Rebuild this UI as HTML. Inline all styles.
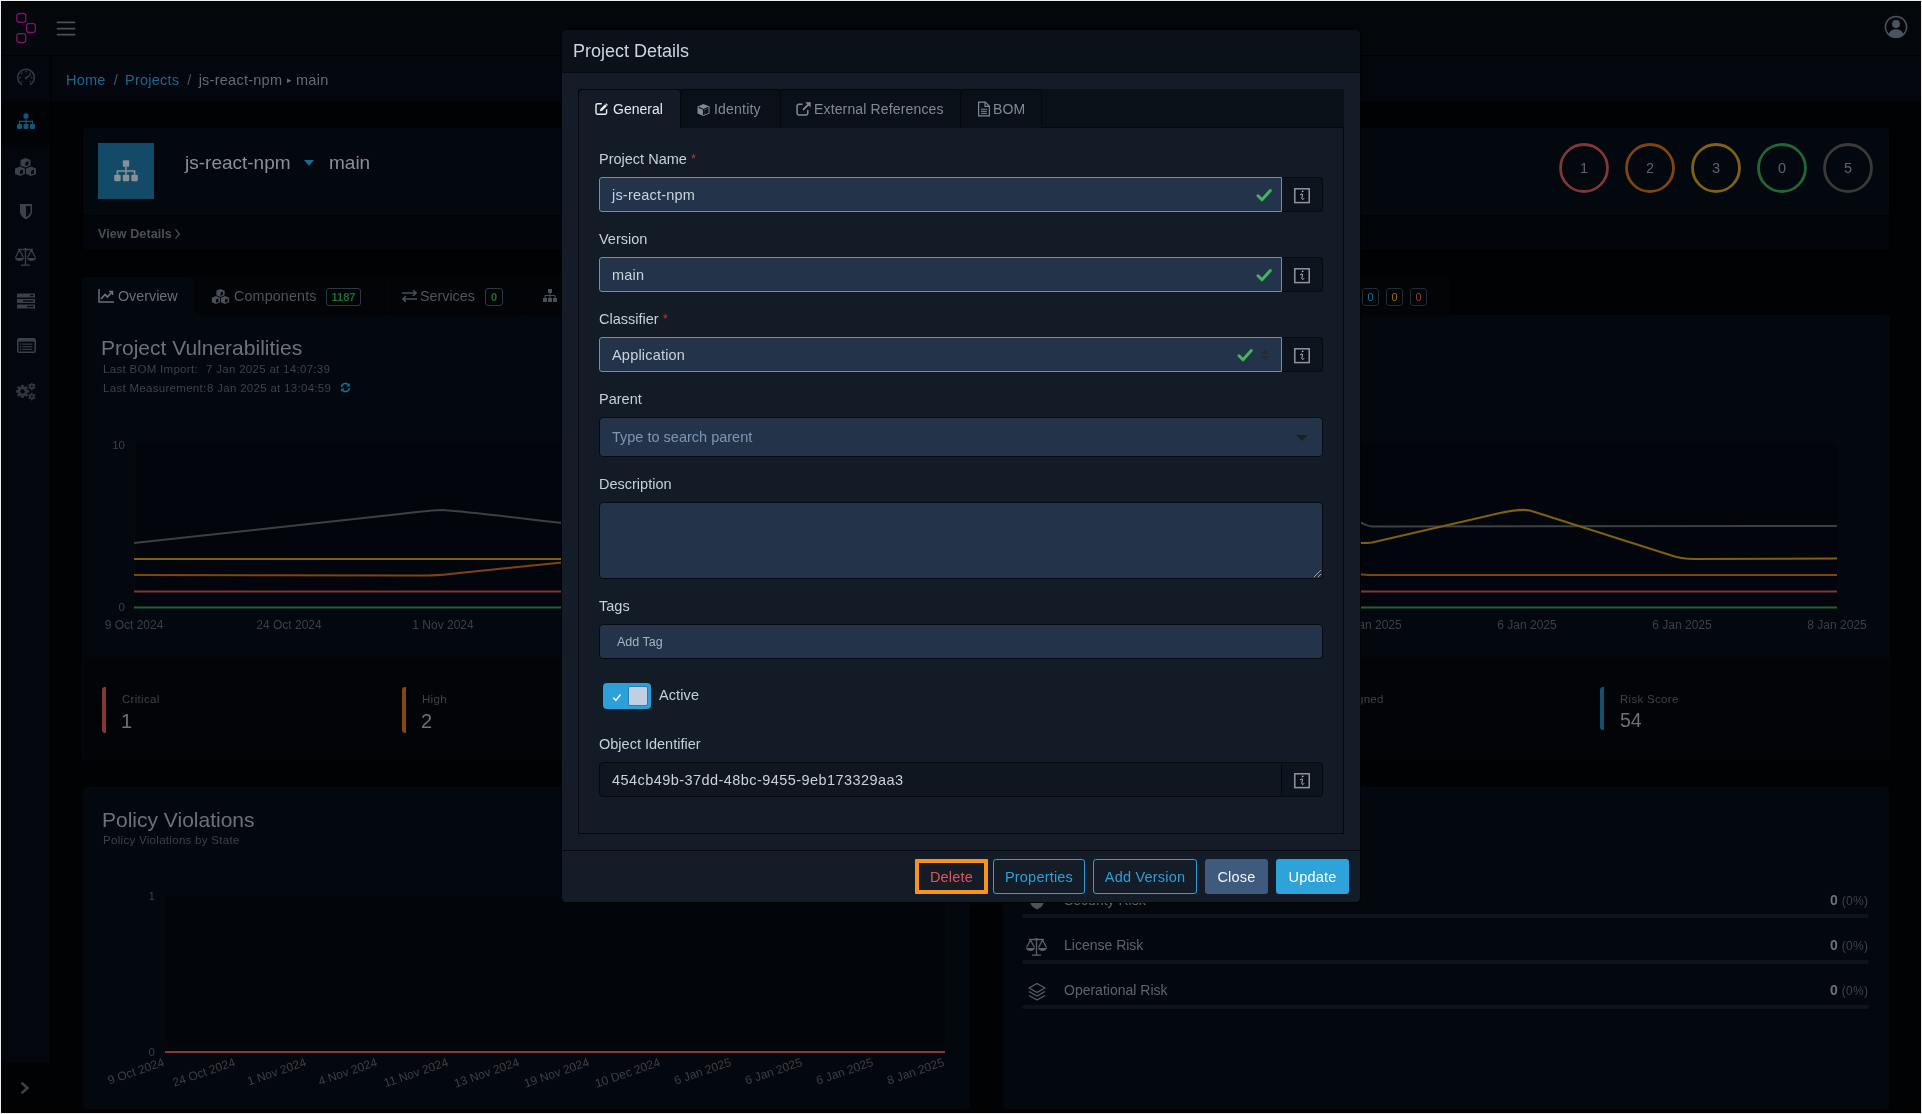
<!DOCTYPE html>
<html><head><meta charset="utf-8">
<style>
*{box-sizing:border-box;margin:0;padding:0}
html,body{width:1922px;height:1114px;overflow:hidden;background:#ececec;font-family:"Liberation Sans",sans-serif}
body{-webkit-font-smoothing:antialiased}
#wrap{position:absolute;left:0;top:0;width:1922px;height:1114px;will-change:transform}
.a{position:absolute;white-space:nowrap}
#scr{left:1px;top:1px;width:1920px;height:1112px;background:#000}
.t14{font-size:14px;line-height:14px}
/* modal */
#modal{left:561px;top:29px;width:800px;height:874px;background:#131c27;border:1px solid #010305;border-radius:5px}
#mhead{left:562px;top:30px;width:798px;height:43px;background:#0b1118;border-bottom:1px solid #05080c;border-radius:4px 4px 0 0}
#mfoot{left:562px;top:850px;width:798px;height:1px;background:#05080c}
#tabnav{left:578px;top:89px;width:766px;height:38px;background:#0a1018}
.tab{top:89px;height:39px;border:1px solid #05080c;border-bottom:none;border-radius:4px 4px 0 0;background:#0a1018;color:#7f8a96;font-size:14px;line-height:14px;padding-top:12px}
.tab.act{background:#121b26;color:#e6eaee}
#tcard{left:578px;top:127px;width:766px;height:707px;background:#121b26;border:1px solid #05080c}
.lbl{position:absolute;left:599px;font-size:14.5px;line-height:14px;color:#c6d0db}
.req{color:#d8262d;font-size:13px;vertical-align:top;position:relative;top:0px}
.inp{position:absolute;left:599px;width:683px;height:35px;background:#22334a;border:1px solid #46b45e;border-radius:3px 0 0 3px;font-size:14.5px;line-height:14.5px;color:#c9d3de;padding:10px 0 0 12px;letter-spacing:0.2px}
.addon{position:absolute;left:1282px;width:41px;height:35px;background:#0d141d;border:1px solid #070b10;border-left:none;border-radius:0 4px 4px 0}
.info{position:absolute;left:11.5px;top:10px}
.info i{position:absolute;left:4px;top:-1px;font-family:"Liberation Serif",serif;font-size:13px;line-height:13px;color:#c9d1da;font-style:italic}
.chk{position:absolute;top:10px;width:16px;height:14px}
.btn{top:859px;height:35px;border-radius:3px;font-size:14.5px;line-height:14px;letter-spacing:0.2px;padding-top:10px;text-align:center}
</style></head><body><div id="wrap">
<div id="scr" class="a"></div>


<!-- ===== BACKGROUND PAGE (dimmed) ===== -->
<div class="a" style="left:2px;top:2px;width:1919px;height:53px;background:#03060b"></div>
<div class="a" style="left:2px;top:56px;width:48px;height:1007px;background:#03070d"></div>
<div class="a" style="left:2px;top:101px;width:48px;height:44px;background:#010305"></div>
<div class="a" style="left:2px;top:1063px;width:48px;height:49px;background:#010204"></div>
<div class="a" style="left:51px;top:56px;width:1870px;height:45px;background:#03070d"></div>
<div class="a" style="left:51px;top:101px;width:1870px;height:1011px;background:#010204"></div>


<!-- header -->
<svg class="a" style="left:14px;top:11px" width="24" height="34" viewBox="0 0 24 34">
 <g fill="none" stroke="#80116f" stroke-width="1.3">
 <rect x="2.8" y="2.5" width="8.9" height="8.9" rx="2.4"/>
 <rect x="12.5" y="12.6" width="8.9" height="8.9" rx="2.4"/>
 <rect x="2.8" y="22.6" width="8.9" height="8.9" rx="2.4"/>
 </g></svg>
<svg class="a" style="left:56px;top:20px" width="20" height="16" viewBox="0 0 20 16">
 <g stroke="#4a5058" stroke-width="1.8" stroke-linecap="round"><path d="M1.5 2.3h17M1.5 8.6h17M1.5 14.6h17"/></g></svg>
<svg class="a" style="left:1884px;top:15px" width="24" height="24" viewBox="0 0 24 24">
 <circle cx="12" cy="12" r="10.6" fill="none" stroke="#4a5360" stroke-width="1.5"/>
 <circle cx="12" cy="9" r="4" fill="#4a5360"/>
 <path d="M4.5 19.2c1.2-3.4 4-5 7.5-5s6.3 1.6 7.5 5c-2 1.9-4.6 3-7.5 3s-5.5-1.1-7.5-3z" fill="#4a5360"/></svg>

<!-- sidebar icons -->
<svg class="a" style="left:16px;top:67px" width="20" height="20" viewBox="0 0 20 20">
 <path d="M5.85 17.7A8.3 8.3 0 1 1 14.15 17.7" fill="none" stroke="#30373f" stroke-width="1.6"/>
 <g fill="#30373f"><circle cx="4.2" cy="10.5" r=".9"/><circle cx="5.9" cy="6.4" r=".9"/><circle cx="10" cy="4.5" r=".9"/><circle cx="14.1" cy="6.4" r=".9"/><circle cx="15.8" cy="10.5" r=".9"/><circle cx="5.9" cy="14.6" r=".8"/><circle cx="14.1" cy="14.6" r=".8"/></g>
 <path d="M10 11l4.2-2.8" stroke="#30373f" stroke-width="1.6" stroke-linecap="round"/><circle cx="10" cy="11" r="1.2" fill="#30373f"/></svg>
<svg class="a" style="left:16px;top:112px" width="20" height="18" viewBox="0 0 20 18">
 <g fill="#16557a"><rect x="7.5" y="1.5" width="5" height="5" rx="1"/><rect x="1" y="12" width="5" height="5" rx="1"/><rect x="7.5" y="12" width="5" height="5" rx="1"/><rect x="14" y="12" width="5" height="5" rx="1"/></g>
 <path d="M10 6.5v5.5M3.5 12V9.3h13V12" fill="none" stroke="#16557a" stroke-width="1.2"/></svg>
<svg class="a" style="left:14px;top:157px" width="23" height="20" viewBox="0 0 23 20">
 <g fill="#3a4149"><path d="M11.5 1l5 2v5.5l-5 2-5-2V3z"/><path d="M6 9.5l5 2v5.5l-5 2-5-2v-5.5z"/><path d="M17 9.5l5 2v5.5l-5 2-5-2v-5.5z"/></g>
 <g fill="#03070d"><path d="M11.5 5.2l3-1.2v3.8l-3 1.2z"/><path d="M6 13.7l3-1.2v3.8l-3 1.2z"/><path d="M17 13.7l3-1.2v3.8l-3 1.2z"/></g></svg>
<svg class="a" style="left:19px;top:203px" width="14" height="17" viewBox="0 0 14 17">
 <path d="M1 1h12v7.5c0 3.5-3 6.5-6 7.8C4 15 1 12 1 8.5z" fill="#3a4149"/><path d="M7 3h4.5v5.5c0 2.2-2 4.3-4.5 5.5z" fill="#03070d"/></svg>
<svg class="a" style="left:14px;top:247px" width="23" height="20" viewBox="0 0 23 20">
 <g fill="none" stroke="#3a4149" stroke-width="1.3"><path d="M11.5 2v16M7 18.2h9M4 2.5h15"/><path d="M5.5 3L1.5 10.5M5.5 3l4 7.5M17.5 3l-4 7.5M17.5 3l4 7.5"/></g>
 <g fill="#3a4149"><path d="M1 11h9c-.5 2-2.3 3-4.5 3S1.5 13 1 11z"/><path d="M13 11h9c-.5 2-2.3 3-4.5 3S13.5 13 13 11z"/><circle cx="11.5" cy="2.3" r="1.4"/></g></svg>
<svg class="a" style="left:17px;top:293px" width="19" height="16" viewBox="0 0 19 16">
 <g fill="#3a4149"><rect x="0" y="0.5" width="18" height="4" rx=".6"/><rect x="0" y="6" width="18" height="4" rx=".6"/><rect x="0" y="11.5" width="18" height="4" rx=".6"/></g>
 <g fill="#03070d"><rect x="13" y="1.8" width="3.5" height="1.4"/><rect x="6" y="7.3" width="10.5" height="1.4"/><rect x="10" y="12.8" width="6.5" height="1.4"/></g></svg>
<svg class="a" style="left:17px;top:338px" width="19" height="15" viewBox="0 0 19 15">
 <rect x=".8" y=".8" width="17.4" height="13.4" rx="1.5" fill="none" stroke="#3a4149" stroke-width="1.5"/><rect x="1" y="1" width="17" height="2.6" fill="#3a4149"/>
 <g fill="#3a4149"><rect x="2.8" y="5.4" width="1.4" height="1.4"/><rect x="2.8" y="8" width="1.4" height="1.4"/><rect x="2.8" y="10.6" width="1.4" height="1.4"/><rect x="5.3" y="5.6" width="10" height="1.1"/><rect x="5.3" y="8.2" width="10" height="1.1"/><rect x="5.3" y="10.8" width="10" height="1.1"/></g></svg>
<svg class="a" style="left:14px;top:383px" width="24" height="20" viewBox="0 0 24 20"><circle cx="8.5" cy="8.4" r="5" fill="#30373f"/><rect x="7.20" y="1.80" width="2.6" height="2.60" fill="#30373f" transform="rotate(0.0 8.5 8.4)"/><rect x="7.20" y="1.80" width="2.6" height="2.60" fill="#30373f" transform="rotate(45.0 8.5 8.4)"/><rect x="7.20" y="1.80" width="2.6" height="2.60" fill="#30373f" transform="rotate(90.0 8.5 8.4)"/><rect x="7.20" y="1.80" width="2.6" height="2.60" fill="#30373f" transform="rotate(135.0 8.5 8.4)"/><rect x="7.20" y="1.80" width="2.6" height="2.60" fill="#30373f" transform="rotate(180.0 8.5 8.4)"/><rect x="7.20" y="1.80" width="2.6" height="2.60" fill="#30373f" transform="rotate(225.0 8.5 8.4)"/><rect x="7.20" y="1.80" width="2.6" height="2.60" fill="#30373f" transform="rotate(270.0 8.5 8.4)"/><rect x="7.20" y="1.80" width="2.6" height="2.60" fill="#30373f" transform="rotate(315.0 8.5 8.4)"/><circle cx="8.5" cy="8.4" r="2.2" fill="#03070d"/><circle cx="17.8" cy="3.4" r="2.6" fill="#30373f"/><rect x="16.95" y="-0.40" width="1.7" height="2.20" fill="#30373f" transform="rotate(0.0 17.8 3.4)"/><rect x="16.95" y="-0.40" width="1.7" height="2.20" fill="#30373f" transform="rotate(60.0 17.8 3.4)"/><rect x="16.95" y="-0.40" width="1.7" height="2.20" fill="#30373f" transform="rotate(120.0 17.8 3.4)"/><rect x="16.95" y="-0.40" width="1.7" height="2.20" fill="#30373f" transform="rotate(180.0 17.8 3.4)"/><rect x="16.95" y="-0.40" width="1.7" height="2.20" fill="#30373f" transform="rotate(240.0 17.8 3.4)"/><rect x="16.95" y="-0.40" width="1.7" height="2.20" fill="#30373f" transform="rotate(300.0 17.8 3.4)"/><circle cx="17.8" cy="3.4" r="1.0" fill="#03070d"/><circle cx="17.8" cy="13.6" r="2.6" fill="#30373f"/><rect x="16.95" y="9.80" width="1.7" height="2.20" fill="#30373f" transform="rotate(0.0 17.8 13.6)"/><rect x="16.95" y="9.80" width="1.7" height="2.20" fill="#30373f" transform="rotate(60.0 17.8 13.6)"/><rect x="16.95" y="9.80" width="1.7" height="2.20" fill="#30373f" transform="rotate(120.0 17.8 13.6)"/><rect x="16.95" y="9.80" width="1.7" height="2.20" fill="#30373f" transform="rotate(180.0 17.8 13.6)"/><rect x="16.95" y="9.80" width="1.7" height="2.20" fill="#30373f" transform="rotate(240.0 17.8 13.6)"/><rect x="16.95" y="9.80" width="1.7" height="2.20" fill="#30373f" transform="rotate(300.0 17.8 13.6)"/><circle cx="17.8" cy="13.6" r="1.0" fill="#03070d"/></svg>
<svg class="a" style="left:19px;top:1081px" width="12" height="14" viewBox="0 0 12 14">
 <path d="M2.5 1.8l6 5.2-6 5.2" fill="none" stroke="#3b424a" stroke-width="2.6"/></svg>

<!-- breadcrumb -->
<div class="a" style="left:66px;top:73px;font-size:14.5px;line-height:14px;letter-spacing:0.25px;color:#1b6790">Home<span style="color:#4f565e;margin:0 7px 0 8px">/</span>Projects<span style="color:#4f565e;margin:0 7px 0 8px">/</span><span style="color:#646a72">js-react-npm <span style="font-size:9px;position:relative;top:-2px">&#9656;</span> main</span></div>


<!-- project card -->
<div class="a" style="left:82px;top:127px;width:1808px;height:124px;background:#03070e;border:1px solid #000;border-radius:3px"></div>
<div class="a" style="left:83px;top:215px;width:1806px;height:35px;background:#020509;border-top:1px solid #010204;border-radius:0 0 3px 3px"></div>
<div class="a" style="left:98px;top:143px;width:56px;height:56px;background:#134a68"></div>
<svg class="a" style="left:111px;top:158px" width="30" height="26" viewBox="0 0 28 24">
 <g fill="#8a9096"><rect x="11" y="2" width="6" height="6" rx="1"/><rect x="3" y="15.5" width="6" height="6" rx="1"/><rect x="11" y="15.5" width="6" height="6" rx="1"/><rect x="19" y="15.5" width="6" height="6" rx="1"/></g>
 <path d="M14 8v7.5M6 15.5V12h16v3.5" fill="none" stroke="#8a9096" stroke-width="1.5"/></svg>
<div class="a" style="left:185px;top:153px;font-size:19px;line-height:19px;color:#8a9096">js-react-npm</div>
<svg class="a" style="left:303px;top:159px" width="12" height="8" viewBox="0 0 12 8"><path d="M1 1h10L6 7z" fill="#1a6a94"/></svg>
<div class="a" style="left:329px;top:153px;font-size:19px;line-height:19px;color:#8a9096">main</div>
<div class="a" style="left:98px;top:228px;font-size:12.5px;line-height:12px;color:#4a5057;font-weight:bold;letter-spacing:0.1px">View Details</div><svg class="a" style="left:174px;top:228px" width="7" height="12" viewBox="0 0 7 12"><path d="M1.5 1.5l4 4.5-4 4.5" fill="none" stroke="#4a5057" stroke-width="1.3"/></svg>
<svg class="a" style="left:1555px;top:139px" width="320" height="58" viewBox="0 0 320 58">
 <g fill="none" stroke-width="2.8">
  <circle cx="29" cy="29" r="23.5" stroke="#7f3636"/>
  <circle cx="95" cy="29" r="23.5" stroke="#80450f"/>
  <circle cx="161" cy="29" r="23.5" stroke="#816111"/>
  <circle cx="227" cy="29" r="23.5" stroke="#226638"/>
  <circle cx="293" cy="29" r="23.5" stroke="#3a3a3b"/>
 </g>
 <g font-family="Liberation Sans" font-size="14.5" fill="#5d636b" text-anchor="middle">
  <text x="29" y="34">1</text><text x="95" y="34">2</text><text x="161" y="34">3</text><text x="227" y="34">0</text><text x="293" y="34">5</text>
 </g></svg>

<!-- tabs -->
<div class="a" style="left:82px;top:277px;width:1368px;height:38px;background:#020408;border-radius:3px 3px 0 0"></div>
<div class="a" style="left:82px;top:277px;width:112px;height:38px;background:#03070e;border-radius:3px 3px 0 0"></div>
<div class="a" style="left:384px;top:277px;width:1px;height:38px;background:#010203"></div>
<div class="a" style="left:526px;top:277px;width:1px;height:38px;background:#010203"></div>
<svg class="a" style="left:98px;top:289px" width="16" height="14" viewBox="0 0 16 14"><path d="M1 0v13h15" fill="none" stroke="#6a7078" stroke-width="1.5"/><path d="M3 10l4-4.5 2.5 2.5L14 3" fill="none" stroke="#6a7078" stroke-width="1.8"/><path d="M11 2.5h3.5V6" fill="none" stroke="#6a7078" stroke-width="1.6"/></svg>
<div class="a" style="left:118px;top:289px;font-size:14.3px;line-height:14px;color:#6a7078">Overview</div>
<svg class="a" style="left:211px;top:288px" width="19" height="17" viewBox="0 0 23 20">
 <g fill="#4a5058"><path d="M11.5 1l5 2v5.5l-5 2-5-2V3z"/><path d="M6 9.5l5 2v5.5l-5 2-5-2v-5.5z"/><path d="M17 9.5l5 2v5.5l-5 2-5-2v-5.5z"/></g>
 <g fill="#020408"><path d="M11.5 5.2l3-1.2v3.8l-3 1.2z"/><path d="M6 13.7l3-1.2v3.8l-3 1.2z"/><path d="M17 13.7l3-1.2v3.8l-3 1.2z"/></g></svg>
<div class="a" style="left:234px;top:289px;font-size:14.3px;line-height:14px;letter-spacing:0.15px;color:#4f555c">Components</div>
<div class="a" style="left:326px;top:288px;width:35px;height:18px;border:1px solid #2a3a40;border-radius:3px;font-size:11px;line-height:11px;padding-top:3px;text-align:center;color:#1b6e2f;font-weight:bold">1187</div>
<svg class="a" style="left:401px;top:289px" width="17" height="14" viewBox="0 0 17 14"><g fill="none" stroke="#4a5058" stroke-width="1.6"><path d="M1 4h14M12 1l3 3-3 3M16 10H2M5 7l-3 3 3 3"/></g></svg>
<div class="a" style="left:420px;top:289px;font-size:14.3px;line-height:14px;color:#4f555c">Services</div>
<div class="a" style="left:485px;top:288px;width:18px;height:18px;border:1px solid #2a3a40;border-radius:3px;font-size:11px;line-height:11px;padding-top:3px;text-align:center;color:#1b6e2f;font-weight:bold">0</div>
<svg class="a" style="left:542px;top:288px" width="16" height="15" viewBox="0 0 16 15"><g fill="#4a5058"><rect x="6" y="1" width="4" height="4"/><rect x="1" y="10" width="4" height="4"/><rect x="6" y="10" width="4" height="4"/><rect x="11" y="10" width="4" height="4"/></g><path d="M8 5v5M3 10V7.5h10V10" fill="none" stroke="#4a5058" stroke-width="1"/></svg>
<div class="a" style="left:1362px;top:288px;width:17px;height:18px;border:1px solid #1f2b35;border-radius:3px;font-size:11px;line-height:11px;padding-top:3px;text-align:center;color:#1f6f99">0</div>
<div class="a" style="left:1386px;top:288px;width:17px;height:18px;border:1px solid #1f2b35;border-radius:3px;font-size:11px;line-height:11px;padding-top:3px;text-align:center;color:#9a7018">0</div>
<div class="a" style="left:1410px;top:288px;width:17px;height:18px;border:1px solid #1f2b35;border-radius:3px;font-size:11px;line-height:11px;padding-top:3px;text-align:center;color:#9a3a3a">0</div>

<!-- overview card -->
<div class="a" style="left:82px;top:315px;width:1808px;height:446px;background:#03070e;border-radius:0 3px 3px 3px"></div>
<div class="a" style="left:83px;top:657px;width:1806px;height:104px;background:#020408;border-radius:0 0 3px 3px"></div>
<div class="a" style="left:101px;top:338px;font-size:21px;line-height:20px;color:#6c7279">Project Vulnerabilities</div>
<div class="a" style="left:103px;top:364px;font-size:11.5px;line-height:11px;letter-spacing:0.3px;color:#3d434a">Last BOM Import:</div>
<div class="a" style="left:206px;top:364px;font-size:11.5px;line-height:11px;letter-spacing:0.3px;color:#3d434a">7 Jan 2025 at 14:07:39</div>
<div class="a" style="left:103px;top:383px;font-size:11.5px;line-height:11px;letter-spacing:0.3px;color:#3d434a">Last Measurement:</div><div class="a" style="left:207px;top:383px;font-size:11.5px;line-height:11px;letter-spacing:0.3px;color:#3d434a">8 Jan 2025 at 13:04:59</div>
<svg class="a" style="left:340px;top:382px" width="11" height="11" viewBox="0 0 11 11"><g fill="none" stroke="#1a6a94" stroke-width="1.5"><path d="M1.5 5A4 4 0 0 1 9 3.5M9.5 6A4 4 0 0 1 2 7.5"/></g><path d="M9.8 1v3.5H6.3z M1.2 10V6.5h3.5z" fill="#1a6a94"/></svg>


<!-- vuln chart -->
<svg class="a" style="left:0;top:0" width="1922" height="1114" viewBox="0 0 1922 1114">
 <rect x="134" y="443" width="1703" height="165" fill="#02060c"/>
 <g stroke="#070a0f" stroke-width="1"><path d="M125 607.5h9M134.5 443v170M289.5 607v6M443.5 607v6M1372.5 607v6M1527.5 607v6M1682.5 607v6M1837.5 607v6"/></g>
 <g fill="none" stroke-width="2" stroke-linejoin="round">
  <path d="M134 543L400 514C425 511 435 510 443 510C470 512 520 518 562 523L700 527L1360 522C1364 524 1367 526 1372 526.5L1837 526" stroke="#3e3f42"/>
  <path d="M134 559L562 559L1360 543C1365 543 1368 543 1372 542.5L1500 513C1515 510 1522 509 1530 510.5L1670 555C1678 558 1683 559 1695 559L1837 558.5" stroke="#80600f"/>
  <path d="M134 575L420 575.5C430 575.5 438 575.5 450 574L562 562.5L700 575L1360 574C1364 575 1367 575 1372 575L1837 575" stroke="#80440f"/>
  <path d="M134 591.5H1837" stroke="#7f3535"/>
  <path d="M134 607.5H1837" stroke="#1f6234"/>
 </g>
 <g font-family="Liberation Sans" font-size="12" fill="#3b4047" text-anchor="middle">
  <text x="134" y="629">9 Oct 2024</text><text x="289" y="629">24 Oct 2024</text><text x="443" y="629">1 Nov 2024</text>
  <text x="1372" y="629">6 Jan 2025</text><text x="1527" y="629">6 Jan 2025</text><text x="1682" y="629">6 Jan 2025</text><text x="1837" y="629">8 Jan 2025</text>
 </g>
 <g font-family="Liberation Sans" font-size="11.5" fill="#3b4047" text-anchor="end">
  <text x="125" y="449">10</text><text x="125" y="611">0</text>
 </g>
</svg>

<!-- callouts -->
<div class="a" style="left:102px;top:687px;width:4px;height:46px;background:#853636;border-radius:3px 0 0 3px"></div>
<div class="a" style="left:122px;top:694px;font-size:11.5px;line-height:11px;letter-spacing:0.3px;color:#3d434a">Critical</div>
<div class="a" style="left:121px;top:711px;font-size:20px;line-height:20px;color:#6c7279">1</div>
<div class="a" style="left:402px;top:687px;width:4px;height:46px;background:#85470f;border-radius:3px 0 0 3px"></div>
<div class="a" style="left:422px;top:694px;font-size:11.5px;line-height:11px;letter-spacing:0.3px;color:#3d434a">High</div>
<div class="a" style="left:421px;top:711px;font-size:20px;line-height:20px;color:#6c7279">2</div>
<div class="a" style="left:1320px;top:694px;font-size:11.5px;line-height:11px;letter-spacing:0.3px;color:#3d434a">Unassigned</div>
<div class="a" style="left:1600px;top:687px;width:4px;height:43px;background:#14506f;border-radius:3px 0 0 3px"></div>
<div class="a" style="left:1620px;top:694px;font-size:11.5px;line-height:11px;letter-spacing:0.3px;color:#3d434a">Risk Score</div>
<div class="a" style="left:1620px;top:711px;font-size:19.5px;line-height:19px;color:#6c7279">54</div>

<!-- policy violations card -->
<div class="a" style="left:83px;top:787px;width:887px;height:322px;background:#03070e;border-radius:3px"></div>
<div class="a" style="left:102px;top:810px;font-size:21px;line-height:20px;color:#6c7279">Policy Violations</div>
<div class="a" style="left:103px;top:835px;font-size:11.5px;line-height:11px;letter-spacing:0.3px;color:#3d434a">Policy Violations by State</div>
<svg class="a" style="left:0;top:0" width="1000" height="1114" viewBox="0 0 1000 1114">
 <rect x="165" y="896" width="780" height="156" fill="#02060b"/>
 <path d="M165 1052H945" stroke="#8a3636" stroke-width="2"/><path d="M156 1052.5h9M156 896.5h9M164.5 896v160" stroke="#05080c" stroke-width="1"/>
 <g font-family="Liberation Sans" font-size="11.5" fill="#3b4047" text-anchor="end">
  <text x="155" y="900">1</text><text x="155" y="1056">0</text>
 </g>
 <g font-family="Liberation Sans" font-size="12" fill="#3b4047" text-anchor="end">
  <text transform="translate(165,1065.5) rotate(-19)">9 Oct 2024</text>
  <text transform="translate(236,1065.5) rotate(-19)">24 Oct 2024</text>
  <text transform="translate(307,1065.5) rotate(-19)">1 Nov 2024</text>
  <text transform="translate(378,1065.5) rotate(-19)">4 Nov 2024</text>
  <text transform="translate(449,1065.5) rotate(-19)">11 Nov 2024</text>
  <text transform="translate(520,1065.5) rotate(-19)">13 Nov 2024</text>
  <text transform="translate(590,1065.5) rotate(-19)">19 Nov 2024</text>
  <text transform="translate(661,1065.5) rotate(-19)">10 Dec 2024</text>
  <text transform="translate(732,1065.5) rotate(-19)">6 Jan 2025</text>
  <text transform="translate(803,1065.5) rotate(-19)">6 Jan 2025</text>
  <text transform="translate(874,1065.5) rotate(-19)">6 Jan 2025</text>
  <text transform="translate(945,1065.5) rotate(-19)">8 Jan 2025</text>
 </g>
</svg>

<!-- risk card -->
<div class="a" style="left:1003px;top:787px;width:886px;height:322px;background:#03070e;border-radius:3px"></div>
<svg class="a" style="left:1028px;top:893px" width="18" height="17" viewBox="0 0 18 17"><path d="M2 1h14v7c0 4-3.5 7-7 8.5C5.5 15 2 12 2 8z" fill="#4d535a"/></svg>
<div class="a" style="left:1064px;top:893px;font-size:14px;line-height:14px;color:#5f656c">Security Risk</div>
<svg class="a" style="left:1025px;top:937px" width="23" height="20" viewBox="0 0 23 20">
 <g fill="none" stroke="#5b6168" stroke-width="1.3"><path d="M11.5 2v16M7 18.2h9M4 2.5h15"/><path d="M5.5 3L1.5 10.5M5.5 3l4 7.5M17.5 3l-4 7.5M17.5 3l4 7.5"/></g>
 <g fill="#5b6168"><path d="M1 11h9c-.5 2-2.3 3-4.5 3S1.5 13 1 11z"/><path d="M13 11h9c-.5 2-2.3 3-4.5 3S13.5 13 13 11z"/><circle cx="11.5" cy="2.3" r="1.3"/></g></svg>
<div class="a" style="left:1064px;top:938px;font-size:14px;line-height:14px;color:#5f656c">License Risk</div>
<svg class="a" style="left:1027px;top:982px" width="20" height="20" viewBox="0 0 20 20">
 <g fill="none" stroke="#5b6168" stroke-width="1.3" stroke-linejoin="round"><path d="M10 1.5L18 6l-8 4.5L2 6z"/><path d="M2 9.5l8 4.5 8-4.5"/><path d="M2 13.5l8 4.5 8-4.5"/></g></svg>
<div class="a" style="left:1064px;top:983px;font-size:14px;line-height:14px;color:#5f656c">Operational Risk</div>
<div class="a" style="left:1830px;top:893px;font-size:14px;line-height:14px;color:#6c7279;font-weight:bold">0 <span style="font-size:12px;font-weight:normal;color:#3d434a;letter-spacing:0.3px">(0%)</span></div>
<div class="a" style="left:1830px;top:938px;font-size:14px;line-height:14px;color:#6c7279;font-weight:bold">0 <span style="font-size:12px;font-weight:normal;color:#3d434a;letter-spacing:0.3px">(0%)</span></div>
<div class="a" style="left:1830px;top:983px;font-size:14px;line-height:14px;color:#6c7279;font-weight:bold">0 <span style="font-size:12px;font-weight:normal;color:#3d434a;letter-spacing:0.3px">(0%)</span></div>
<div class="a" style="left:1022px;top:914px;width:847px;height:4px;background:#0d141c;border-radius:2px"></div>
<div class="a" style="left:1022px;top:960px;width:847px;height:4px;background:#0d141c;border-radius:2px"></div>
<div class="a" style="left:1022px;top:1005px;width:847px;height:4px;background:#0d141c;border-radius:2px"></div>

<!-- ===== MODAL ===== -->
<div id="modal" class="a"></div>
<div id="mhead" class="a"></div>
<div class="a" style="left:573px;top:42px;font-size:18px;line-height:18px;color:#cbd6e3">Project Details</div>
<div id="tabnav" class="a"></div>
<div id="tcard" class="a"></div>
<div class="a tab act" style="left:578px;width:103px"></div>
<div class="a tab" style="left:680px;width:101px"></div>
<div class="a tab" style="left:780px;width:181px"></div>
<div class="a tab" style="left:960px;width:82px"></div>
<svg class="a" style="left:595px;top:102px" width="15" height="13" viewBox="0 0 15 13"><path d="M6.8 1.7H2.5A1.5 1.5 0 0 0 1 3.2v7.6A1.5 1.5 0 0 0 2.5 12.3h7.6a1.5 1.5 0 0 0 1.5-1.5V7.2" fill="none" stroke="#eaeef2" stroke-width="1.4"/><path d="M4.9 9.3l.5-2.3 5.7-5.7 1.8 1.8-5.7 5.7z" fill="#eaeef2"/><path d="M10.2 2.2l1.8 1.8" stroke="#121b26" stroke-width=".6"/></svg>
<div class="a" style="left:613px;top:102px;font-size:14px;line-height:14px;color:#e6eaee">General</div>
<svg class="a" style="left:696px;top:103px" width="15" height="14" viewBox="0 0 15 14"><path d="M7.5 1L13.5 3.6v6.8L7.5 13 1.5 10.4V3.6z" fill="#7f8a96"/><path d="M2.6 4.3l4.9 2.1 4.9-2.1" fill="none" stroke="#0a1018" stroke-width="1.1"/><path d="M7.5 6.4v5.6" stroke="#0a1018" stroke-width="1.1"/><path d="M8.2 7l4.3-1.9v4.8l-4.3 1.9z" fill="#0a1018"/></svg>
<div class="a" style="left:714px;top:102px;font-size:14px;line-height:14px;letter-spacing:0.2px;color:#7f8a96">Identity</div>
<svg class="a" style="left:796px;top:101px" width="16" height="15" viewBox="0 0 16 15"><path d="M6.5 3.2H2.7A1.6 1.6 0 0 0 1.1 4.8v7.5a1.6 1.6 0 0 0 1.6 1.6h7.5a1.6 1.6 0 0 0 1.6-1.6V9" fill="none" stroke="#7f8a96" stroke-width="1.5"/><path d="M9.2 1.2h5.4v5.4z" fill="#7f8a96"/><path d="M14 1.8L7 8.8" stroke="#7f8a96" stroke-width="1.8"/></svg>
<div class="a" style="left:814px;top:102px;font-size:14px;line-height:14px;letter-spacing:0.15px;color:#7f8a96">External References</div>
<svg class="a" style="left:977px;top:101px" width="14" height="16" viewBox="0 0 14 16"><path d="M1.6 1.1h6.6l4.2 4.2v9.6H1.6z" fill="none" stroke="#7f8a96" stroke-width="1.2"/><path d="M8 1.1v4.3h4.3" fill="none" stroke="#7f8a96" stroke-width="1.1"/><path d="M4 8.2h6M4 10.3h6M4 12.4h6" stroke="#7f8a96" stroke-width="1"/></svg>
<div class="a" style="left:993px;top:102px;font-size:14px;line-height:14px;letter-spacing:0.1px;color:#7f8a96">BOM</div>

<div class="lbl" style="top:152px">Project Name <span class="req">*</span></div>
<div class="inp" style="top:177px">js-react-npm</div>
<div class="addon" style="top:177px"><svg class="info" width="16" height="16" viewBox="0 0 16 16"><rect x="0.8" y="0.8" width="14.4" height="13.8" fill="#0a0f16" stroke="#8c98a5" stroke-width="1.5"/><circle cx="8.6" cy="3.3" r=".85" fill="#b0bfd0"/><path d="M6.3 6.7Q7.3 5.6 8.2 6Q8.6 7.2 8 9.3Q7.5 11.3 8.6 11.5Q9.4 11.5 9.9 10.6" fill="none" stroke="#b0bfd0" stroke-width="1" stroke-linecap="round"/></svg></div>

<div class="lbl" style="top:232px">Version</div>
<div class="inp" style="top:257px">main</div>
<div class="addon" style="top:257px"><svg class="info" width="16" height="16" viewBox="0 0 16 16"><rect x="0.8" y="0.8" width="14.4" height="13.8" fill="#0a0f16" stroke="#8c98a5" stroke-width="1.5"/><circle cx="8.6" cy="3.3" r=".85" fill="#b0bfd0"/><path d="M6.3 6.7Q7.3 5.6 8.2 6Q8.6 7.2 8 9.3Q7.5 11.3 8.6 11.5Q9.4 11.5 9.9 10.6" fill="none" stroke="#b0bfd0" stroke-width="1" stroke-linecap="round"/></svg></div>

<div class="lbl" style="top:312px">Classifier <span class="req">*</span></div>
<div class="inp" style="top:337px">Application</div>
<div class="addon" style="top:337px"><svg class="info" width="16" height="16" viewBox="0 0 16 16"><rect x="0.8" y="0.8" width="14.4" height="13.8" fill="#0a0f16" stroke="#8c98a5" stroke-width="1.5"/><circle cx="8.6" cy="3.3" r=".85" fill="#b0bfd0"/><path d="M6.3 6.7Q7.3 5.6 8.2 6Q8.6 7.2 8 9.3Q7.5 11.3 8.6 11.5Q9.4 11.5 9.9 10.6" fill="none" stroke="#b0bfd0" stroke-width="1" stroke-linecap="round"/></svg></div>

<div class="lbl" style="top:392px">Parent</div>
<div class="a" style="left:599px;top:417px;width:724px;height:40px;background:#22334a;border:1px solid #070b10;border-radius:4px;font-size:14.5px;line-height:14.5px;color:#7d96b3;padding:12px 0 0 12px">Type to search parent</div>

<div class="lbl" style="top:477px">Description</div>
<div class="a" style="left:599px;top:502px;width:724px;height:77px;background:#22334a;border:1px solid #070b10;border-radius:4px"></div>

<div class="lbl" style="top:599px">Tags</div>
<div class="a" style="left:599px;top:624px;width:724px;height:35px;background:#22334a;border:1px solid #070b10;border-radius:4px;font-size:12.5px;line-height:12.5px;color:#a8b3bf;padding:11px 0 0 17px">Add Tag</div>

<div class="a" style="left:603px;top:683px;width:48px;height:26px;background:#2d9fd9;border-radius:4px"></div>
<div class="a" style="left:628px;top:686px;width:20px;height:20px;background:#c1cfe3;border-radius:2px;border:1px solid #2580b3"></div>
<div class="lbl" style="left:659px;top:688px;letter-spacing:0.1px">Active</div>

<div class="lbl" style="top:737px">Object Identifier</div>
<div class="a" style="left:599px;top:762px;width:683px;height:35px;background:#0f1620;border:1px solid #05080c;border-radius:4px 0 0 4px;font-size:14.5px;line-height:14.5px;color:#c9d1da;padding:10px 0 0 12px;letter-spacing:0.44px">454cb49b-37dd-48bc-9455-9eb173329aa3</div>
<div class="addon" style="top:762px;height:35px"><svg class="info" width="16" height="16" viewBox="0 0 16 16"><rect x="0.8" y="0.8" width="14.4" height="13.8" fill="#0a0f16" stroke="#8c98a5" stroke-width="1.5"/><circle cx="8.6" cy="3.3" r=".85" fill="#b0bfd0"/><path d="M6.3 6.7Q7.3 5.6 8.2 6Q8.6 7.2 8 9.3Q7.5 11.3 8.6 11.5Q9.4 11.5 9.9 10.6" fill="none" stroke="#b0bfd0" stroke-width="1" stroke-linecap="round"/></svg></div>


<!-- input decorations -->
<svg class="a" style="left:1256px;top:187px" width="17" height="15" viewBox="0 0 17 15"><path d="M2 8.8l4 4L14.3 3.5" fill="none" stroke="#46b45e" stroke-width="3" stroke-linecap="round" stroke-linejoin="round"/></svg>
<svg class="a" style="left:1256px;top:267px" width="17" height="15" viewBox="0 0 17 15"><path d="M2 8.8l4 4L14.3 3.5" fill="none" stroke="#46b45e" stroke-width="3" stroke-linecap="round" stroke-linejoin="round"/></svg>
<svg class="a" style="left:1237px;top:347px" width="17" height="15" viewBox="0 0 17 15"><path d="M2 8.8l4 4L14.3 3.5" fill="none" stroke="#46b45e" stroke-width="3" stroke-linecap="round" stroke-linejoin="round"/></svg>
<svg class="a" style="left:1260px;top:349px" width="10" height="12" viewBox="0 0 10 12"><path d="M1 5L5 1l4 4zM1 7l4 4 4-4z" fill="#252a31"/></svg>
<svg class="a" style="left:1295px;top:434px" width="14" height="8" viewBox="0 0 14 8"><path d="M1 1h12L7 7z" fill="#1c2027"/></svg>
<svg class="a" style="left:1312px;top:568px" width="10" height="10" viewBox="0 0 10 10"><path d="M9 2L2 9M9 6L6 9" stroke="#9aa3ad" stroke-width="1"/></svg>
<svg class="a" style="left:612px;top:692px" width="10" height="10" viewBox="0 0 10 10"><path d="M1.3 5.6l2.6 2.9 4.6-6" fill="none" stroke="#fff" stroke-width="1.4"/></svg>

<div id="mfoot" class="a"></div>
<div class="a btn" style="left:915px;width:73px;border:4px solid #f7941d;border-radius:1px;color:#e55353;padding-top:7px;background:#131c27">Delete</div>
<div class="a btn" style="left:993px;width:92px;border:1px solid #2d9fd9;color:#2d9fd9">Properties</div>
<div class="a btn" style="left:1093px;width:104px;border:1px solid #2d9fd9;color:#2d9fd9">Add Version</div>
<div class="a btn" style="left:1205px;width:63px;background:#3e5a7d;color:#f2f5f8;padding-top:11px">Close</div>
<div class="a btn" style="left:1276px;width:73px;background:#2ea3da;color:#ffffff;padding-top:11px">Update</div>
</div></body></html>
